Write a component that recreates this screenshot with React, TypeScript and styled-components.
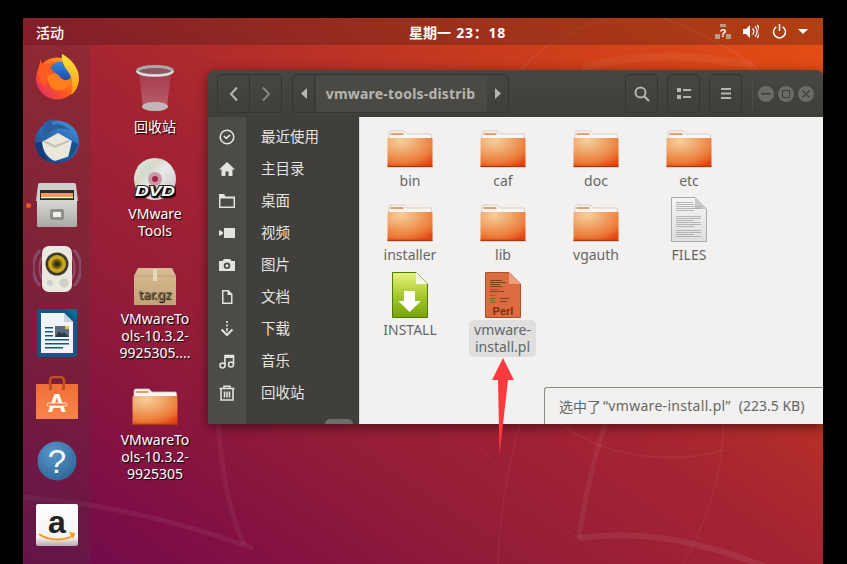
import React from "react";
import styled, { createGlobalStyle } from "styled-components";

const FONT = `"Noto Sans", "Noto Sans CJK SC", sans-serif`;

const Global = createGlobalStyle`
  html, body { margin: 0; padding: 0; background: #000; overflow: hidden; }
  * { box-sizing: border-box; }
`;

const Screen = styled.div`
  position: relative;
  width: 847px;
  height: 564px;
  padding: 18px 24px 0 23px;
  background: #000;
  font-family: ${FONT};
`;
const Desktop = styled.div`
  position: relative;
  width: 800px;
  height: 546px;
  display: flex;
  flex-direction: column;
  overflow: hidden;
  background: linear-gradient(to top right, #6c0a4e 0%, #7e0e45 12%, #921c38 30%, #a52432 50%, #c73a1e 75%, #e84f12 100%);
`;
const Wallpaper = styled.svg`
  position: absolute;
  left: 0;
  top: 0;
`;
const TopBar = styled.header`
  position: relative;
  height: 27px;
  flex: none;
  display: flex;
  align-items: center;
  padding: 0 15px 0 13px;
  background: rgba(30, 20, 20, 0.26);
  color: #fff;
  font-size: 14px;
`;
const Activities = styled.span`
  font-weight: 500;
  width: 28px;
  white-space: nowrap;
`;
const Clock = styled.span`
  margin-left: 345px;
  font-weight: 700;
  font-size: 14px;
  white-space: nowrap;
`;
const ClockTime = styled.span`
  letter-spacing: 0.7px;
  margin-left: 1px;
`;
const Tray = styled.div`
  margin-left: auto;
  display: flex;
  align-items: center;
  gap: 12px;
`;
const Body = styled.div`
  position: relative;
  flex: 1;
  display: flex;
  min-height: 0;
`;
const Dock = styled.nav`
  width: 67px;
  flex: none;
  display: flex;
  flex-direction: column;
  background: rgba(70, 60, 60, 0.24);
`;
const DockSlot = styled.div`
  position: relative;
  height: 64px;
  display: flex;
  align-items: center;
  justify-content: center;
`;
const RunDot = styled.span`
  position: absolute;
  left: 2.5px;
  top: 29.5px;
  width: 5px;
  height: 5px;
  border-radius: 50%;
  background: #e95420;
`;
const DesktopColumn = styled.div`
  width: 86px;
  margin-left: 22px;
  display: flex;
  flex-direction: column;
  align-items: center;
`;
const DesktopItem = styled.div<{ $top: number }>`
  margin-top: ${(p) => p.$top}px;
  display: flex;
  flex-direction: column;
  align-items: center;
  color: #fff;
  font-size: 14px;
  line-height: 17px;
  text-align: center;
  text-shadow: 1px 1px 1px #000;
  white-space: nowrap;
  svg { display: block; margin-bottom: 5px; }
`;
const Window = styled.section`
  position: absolute;
  left: 185px;
  top: 25px;
  width: 615px;
  height: 354px;
  display: flex;
  flex-direction: column;
  border-radius: 6px 6px 0 0;
  overflow: hidden;
  box-shadow: 0 3px 12px rgba(0, 0, 0, 0.5);
`;
const HeaderBar = styled.div`
  height: 47px;
  flex: none;
  display: flex;
  align-items: center;
  padding: 0 9px;
  background: linear-gradient(#474641, #3f3e3a);
`;
const ButtonGroup = styled.div<{ $ml?: number }>`
  height: 39px;
  display: flex;
  margin-left: ${(p) => p.$ml ?? 0}px;
  border: 1px solid #353430;
  border-radius: 5px;
  overflow: hidden;
`;
const HeadButton = styled.div<{ $w: number; $line?: boolean }>`
  width: ${(p) => p.$w}px;
  display: flex;
  align-items: center;
  justify-content: center;
  border-right: ${(p) => (p.$line ? "1px solid #353430" : "none")};
`;
const PathLabel = styled.div`
  width: 173px;
  display: flex;
  align-items: center;
  justify-content: center;
  background: #4a4944;
  box-shadow: inset 2px 0 2px -1px #2f2e2b;
  color: #b6b5af;
  font-size: 14px;
  font-weight: 700;
  letter-spacing: 0.2px;
  white-space: nowrap;
`;
const Spacer = styled.div`
  flex: 1;
`;
const Separator = styled.div`
  width: 1px;
  height: 32px;
  margin: 0 1px 0 10px;
  background: #4e4d48;
`;
const WinControl = styled.div`
  width: 16px;
  height: 16px;
  margin-left: 4px;
  border-radius: 50%;
  background: #6b6a65;
  display: flex;
  align-items: center;
  justify-content: center;
`;
const Main = styled.div`
  position: relative;
  flex: 1;
  display: flex;
  min-height: 0;
`;
const Sidebar = styled.aside`
  position: relative;
  width: 151px;
  flex: none;
  padding-top: 4px;
  background: linear-gradient(to right, #4c4b46 38px, #403f3b 38px);
`;
const SideRow = styled.div`
  height: 32px;
  display: flex;
  align-items: center;
  color: #e6e4e1;
  font-size: 14.5px;
`;
const SideLabel = styled.span`
  margin-top: -3px;
`;
const SideIcon = styled.div`
  width: 38px;
  flex: none;
  margin-right: 15px;
  display: flex;
  align-items: center;
  justify-content: center;
`;
const ScrollBump = styled.div`
  position: absolute;
  right: 6px;
  bottom: 0;
  width: 28px;
  height: 5px;
  border-radius: 14px 14px 0 0;
  background: #6e6d68;
`;
const Files = styled.main`
  flex: 1;
  padding: 3px 0 0 3px;
  display: grid;
  grid-template-columns: repeat(4, 93px);
  grid-template-rows: 74px 76px 1fr;
  background: #f2f1f0;
  border-left: 1px solid #dbd9d6;
`;
const FileItem = styled.div`
  display: flex;
  flex-direction: column;
  align-items: center;
  color: #666;
  font-size: 14px;
  line-height: 17px;
  text-align: center;
`;
const FileIconBox = styled.div<{ $gap?: number }>`
  height: 48px;
  display: flex;
  align-items: flex-end;
  margin-bottom: ${(p) => p.$gap ?? 4}px;
  svg { display: block; }
`;
const FileName = styled.div<{ $selected?: boolean }>`
  padding: ${(p) => (p.$selected ? "1px 5px 2px" : "0 0 0 1px")};
  margin-top: ${(p) => (p.$selected ? "-1px" : "0")};
  border-radius: 5px;
  background: ${(p) => (p.$selected ? "#e0dfdd" : "transparent")};
  white-space: nowrap;
`;
const Status = styled.div`
  position: absolute;
  right: 0;
  bottom: 0;
  width: 279px;
  height: 37px;
  padding: 0 0 1px 14px;
  display: flex;
  align-items: center;
  background: #f2f1f0;
  border: 1px solid #8a8985;
  border-width: 1px 0 0 1px;
  border-radius: 3px 0 0 0;
  color: #666;
  font-size: 14px;
  white-space: nowrap;
`;
const FileQuoted = styled.span`
  margin: 0 8px 0 2px;
  letter-spacing: 0.3px;
`;
const Annotation = styled.svg`
  position: absolute;
  left: 490px;
  top: 356px;
  z-index: 5;
`;

/* ---------- drawings ---------- */
const Defs = () => (
  <svg width="0" height="0" style={{ position: "absolute" }}>
    <defs>
      <radialGradient id="fold" cx="0.3" cy="0.1" r="1">
        <stop offset="0" stopColor="#f6cf9c" />
        <stop offset="0.4" stopColor="#f0a468" />
        <stop offset="0.75" stopColor="#ec7a38" />
        <stop offset="1" stopColor="#e4430f" />
      </radialGradient>
      <linearGradient id="ffx" x1="0" y1="1" x2="1" y2="0">
        <stop offset="0" stopColor="#d9246f" />
        <stop offset="0.45" stopColor="#ff5a1f" />
        <stop offset="1" stopColor="#ffc01e" />
      </linearGradient>
      <linearGradient id="ffy" x1="0" y1="0" x2="0" y2="1">
        <stop offset="0" stopColor="#ffe23a" />
        <stop offset="1" stopColor="#ff9a1a" />
      </linearGradient>
      <linearGradient id="ffg" x1="0" y1="0" x2="0" y2="1">
        <stop offset="0" stopColor="#2e8ee0" />
        <stop offset="1" stopColor="#1f2f9c" />
      </linearGradient>
      <linearGradient id="tb" x1="0.8" y1="0" x2="0.2" y2="1">
        <stop offset="0" stopColor="#3f8fd8" />
        <stop offset="1" stopColor="#143f80" />
      </linearGradient>
      <linearGradient id="steel" x1="0" y1="0" x2="0" y2="1">
        <stop offset="0" stopColor="#d8d8d5" />
        <stop offset="1" stopColor="#a9a9a6" />
      </linearGradient>
      <linearGradient id="bag" x1="0" y1="0" x2="0" y2="1">
        <stop offset="0" stopColor="#ef6f35" />
        <stop offset="1" stopColor="#f9844a" />
      </linearGradient>
      <radialGradient id="help" cx="0.4" cy="0.3" r="0.8">
        <stop offset="0" stopColor="#5b96c8" />
        <stop offset="1" stopColor="#2a6496" />
      </radialGradient>
      <linearGradient id="trash" x1="0" y1="0" x2="0" y2="1">
        <stop offset="0" stopColor="#a63a4c" />
        <stop offset="1" stopColor="#b9636f" />
      </linearGradient>
      <linearGradient id="disc" x1="0" y1="0" x2="1" y2="1">
        <stop offset="0" stopColor="#f4f4f4" />
        <stop offset="0.3" stopColor="#d4d8c8" />
        <stop offset="0.5" stopColor="#e9e9e9" />
        <stop offset="1" stopColor="#bdbdbd" />
      </linearGradient>
      <linearGradient id="box" x1="0" y1="0" x2="0" y2="1">
        <stop offset="0" stopColor="#d9bd94" />
        <stop offset="1" stopColor="#c2a377" />
      </linearGradient>
      <linearGradient id="inst" x1="0" y1="0" x2="0" y2="1">
        <stop offset="0" stopColor="#e8f37c" />
        <stop offset="0.5" stopColor="#a9c92e" />
        <stop offset="1" stopColor="#78a20e" />
      </linearGradient>
      <linearGradient id="paper" x1="0" y1="0" x2="0" y2="1">
        <stop offset="0" stopColor="#f4f4f3" />
        <stop offset="1" stopColor="#dededc" />
      </linearGradient>
      <linearGradient id="amz" x1="0" y1="0" x2="0" y2="1">
        <stop offset="0" stopColor="#ffffff" />
        <stop offset="0.8" stopColor="#f2f2f2" />
        <stop offset="1" stopColor="#b9a6b0" />
      </linearGradient>
    </defs>
  </svg>
);

const Folder = () => (
  <svg width="46" height="38" viewBox="0 0 46 38">
    <path d="M2 9V3q0-2 2-2h13l3 3h23q1.500 0 1.500 1.500V9z" fill="#f8f6f4" stroke="#c9c5c0" strokeWidth="0.8" />
    <rect x="3.500" y="3" width="13" height="2" fill="#ef9a6b" />
    <rect x="0.500" y="8" width="45" height="29" rx="1" fill="url(#fold)" />
    <rect x="0.500" y="35.800" width="45" height="1.400" fill="#a83a12" />
  </svg>
);

const TextDoc = () => {
  const lines = [5, 7, 9, 11, 13, 19, 21, 23, 25, 27, 29, 33, 35, 37, 39];
  return (
    <svg width="36" height="45" viewBox="0 0 36 45">
      <path d="M.5.500H24L35.500 12V44.500H.5z" fill="url(#paper)" stroke="#aaa" />
      <path d="M24 .5V12H35.500z" fill="#c8c8c6" />
      {lines.map((y, i) => (
        <rect key={y} x="5" y={y} width={i % 3 === 1 ? 18 : i < 2 ? 17 : 25} height="0.8" fill="#a8a8a8" />
      ))}
    </svg>
  );
};

const InstallDoc = () => (
  <svg width="36" height="46" viewBox="0 0 36 46">
    <path d="M.5.500H24L35.500 12V45.500H.5z" fill="url(#inst)" stroke="#4d7a08" />
    <path d="M24 .5V12H35.500z" fill="#f4f6e0" />
    <path d="M12 19h11v10h6L17.500 40 6.500 29H12z" fill="#fff" />
  </svg>
);

const PerlDoc = () => {
  const lines: [number, number, string][] = [
    [8, 12, "#7a3a20"], [10, 16, "#7a3a20"], [12, 10, "#7a3a20"], [14, 12, "#7a3a20"], [17, 9, "#c33"], [19, 14, "#7a3a20"],
    [23, 5, "#6b6b20"], [26, 6, "#6b6b20"], [28, 5, "#6b6b20"], [30, 6, "#6b6b20"],
  ];
  return (
    <svg width="36" height="46" viewBox="0 0 36 46">
      <path d="M.5.500H24L35.500 12V45.500H.5z" fill="#dc6b3f" stroke="#b24e28" />
      <path d="M24 .5V12H35.500z" fill="#eda07e" />
      {lines.map(([y, w, c]) => (
        <rect key={y} x="5" y={y} width={w} height="0.9" fill={c} />
      ))}
      <rect x="15" y="26" width="9" height="0.9" fill="#7a3a20" />
      <rect x="15" y="29" width="7" height="0.9" fill="#7a3a20" />
      <text x="18" y="43" textAnchor="middle" fontFamily="'Liberation Sans', sans-serif" fontWeight="700" fontSize="11" fill="#7d3015">Perl</text>
    </svg>
  );
};

const Firefox = () => (
  <svg width="44" height="46" viewBox="0 0 44 46">
    <circle cx="22" cy="24.500" r="21" fill="url(#ffx)" />
    <circle cx="25" cy="20" r="12.500" fill="url(#ffg)" />
    <path d="M27 0C35 4 44 13 44 24c0 8-4 14-8 17 3-10 1-19-4-25-3-4-6-10-5-16z" fill="url(#ffy)" />
    <path d="M12 21c3-4 10-3 13 2 3 4 9 4 11 0 1 8-7 15-15 13-6-2-9-9-9-15z" fill="#ff7f1e" />
    <path d="M6 5c0 4 2 6 5 6 3-2 7-3 11-3-1 2-5 3-6 5-1 3 4 4 4 6-3 2-8 1-9 5-1 3-1 6 0 9C5 30 2 20 4 12c1-3 1-5 2-7z" fill="#ff5a1f" />
  </svg>
);

const Thunderbird = () => (
  <svg width="44" height="46" viewBox="0 0 44 46">
    <ellipse cx="22" cy="24" rx="22" ry="21.500" fill="url(#tb)" />
    <path d="M8 6c4-4 9-5 12-5-3 2-4 4-3 6 6-2 14 0 18 6-5-3-11-3-16-1-4 1-7 5-8 9C9 18 7 11 8 6z" fill="#2c5d9e" />
    <path d="M7 24l16-9 14 8-2 15-15 5C12 40 8 33 7 24z" fill="#ece7dc" />
    <path d="M8 24l12 6 16-7-2-1-14 5-11-5z" fill="#c9c3b6" />
    <path d="M0 25c0 9 6 16 14 19-4-5-7-12-7-20z" fill="#123d78" />
    <path d="M33 40c5-3 9-8 10-14l-6-3z" fill="#17508f" />
  </svg>
);

const Cabinet = () => (
  <svg width="42" height="44" viewBox="0 0 42 44">
    <path d="M2 2q0-2 2-2h34q2 0 2 2l2 16H0z" fill="#cfcfcd" />
    <rect x="4" y="7" width="34" height="12" fill="#2d2a27" />
    <rect x="5" y="10" width="32" height="4" fill="#ef9a55" />
    <rect x="5" y="14" width="32" height="1.200" fill="#fff" />
    <rect x="1" y="17" width="40" height="27" rx="1.500" fill="url(#steel)" />
    <rect x="14" y="26" width="14" height="11" rx="2" fill="#8e8e8b" />
    <rect x="16.500" y="28.500" width="9" height="6" fill="#efefed" stroke="#777" strokeWidth="0.6" />
  </svg>
);

const Rhythmbox = () => (
  <svg width="48" height="46" viewBox="0 0 48 46">
    <path d="M7 4C-2 14-2 30 7 40M41 4c9 10 9 26 0 36" fill="none" stroke="#8c7ea4" strokeWidth="3" opacity="0.45" />
    <path d="M11 8C5 16 5 28 11 36M37 8c6 8 6 20 0 28" fill="none" stroke="#a89ab8" strokeWidth="2" opacity="0.4" />
    <rect x="9" y="0" width="30" height="46" rx="7" fill="#e9e9e1" />
    <circle cx="24" cy="18" r="11.500" fill="#3c3a2c" />
    <circle cx="24" cy="18" r="9" fill="#c7a41f" />
    <circle cx="24" cy="18" r="5" fill="#6d5c12" />
    <circle cx="24" cy="18" r="2.500" fill="#2f2b18" />
    <circle cx="17" cy="37" r="3" fill="#d0d0c8" />
    <circle cx="31" cy="37" r="4.500" fill="#cfcfc6" />
  </svg>
);

const Writer = () => (
  <svg width="40" height="48" viewBox="0 0 40 48">
    <path d="M2 0H29L40 11V45q0 3-3 3H3q-3 0-3-3V2q0-2 2-2z" fill="#0e5a86" />
    <path d="M29 0h9q2 0 2 2v9z" fill="#14699b" />
    <path d="M4 4H27L36 13V44H4z" fill="#f3f4f5" />
    <path d="M27 4V13H36z" fill="#c7d2da" />
    <g fill="#0e5a86">
      <rect x="8" y="18" width="8" height="1.500" />
      <rect x="8" y="22" width="8" height="1.500" />
      <rect x="8" y="26" width="8" height="1.500" />
      <rect x="8" y="30" width="24" height="1.500" />
      <rect x="8" y="34" width="24" height="1.500" />
      <rect x="8" y="38" width="18" height="1.500" />
    </g>
    <rect x="18" y="17" width="14" height="11" fill="#5a6f7d" />
    <path d="M18 28l4-6 3 3 2-2 5 5z" fill="#2d3a44" />
    <rect x="28" y="17" width="4" height="3" fill="#e6c84a" />
  </svg>
);

const Bag = () => (
  <svg width="42" height="43" viewBox="0 0 42 43">
    <path d="M14 13V5q0-4 4-4h6q4 0 4 4v8" fill="none" stroke="#c24f1f" strokeWidth="2.500" />
    <rect x="0" y="8" width="42" height="35" fill="url(#bag)" />
    <rect x="13" y="8" width="3" height="6" fill="#c24f1f" />
    <rect x="26" y="8" width="3" height="6" fill="#c24f1f" />
    <text x="21" y="36" textAnchor="middle" fontFamily="'Liberation Sans', sans-serif" fontWeight="700" fontSize="26" fill="#fff">A</text>
    <rect x="11" y="27" width="20" height="3" rx="1.500" fill="#f47b3c" stroke="#fff" strokeWidth="0.800" />
  </svg>
);

const Help = () => (
  <svg width="40" height="40" viewBox="0 0 40 40">
    <circle cx="20" cy="20" r="19.500" fill="url(#help)" />
    <text x="20" y="32" textAnchor="middle" fontFamily="'Liberation Sans', sans-serif" fontWeight="400" fontSize="33" fill="#fff">?</text>
  </svg>
);

const Amazon = () => (
  <svg width="42" height="42" viewBox="0 0 42 42">
    <rect width="42" height="42" rx="2" fill="url(#amz)" />
    <text x="21" y="29" textAnchor="middle" fontFamily="'Liberation Sans', sans-serif" fontWeight="700" fontSize="32" fill="#222">a</text>
    <path d="M3 30c8 6 24 8 35 1" fill="none" stroke="#f19a1e" strokeWidth="2" />
    <path d="M33 28l6 1-2 6z" fill="#f19a1e" />
  </svg>
);

const Trash = () => (
  <svg width="38" height="48" viewBox="0 0 38 48">
    <path d="M3 8l4 34q0 4 12 4t12-4l4-34z" fill="url(#trash)" />
    <ellipse cx="19" cy="41.500" rx="13" ry="4.500" fill="#c2b6b8" />
    <ellipse cx="19" cy="6" rx="17.500" ry="4.500" fill="#8d5660" stroke="#a9a9a7" strokeWidth="3" />
    <path d="M1 6c2 6 34 6 36 0" fill="none" stroke="#e2e2e0" strokeWidth="1.800" />
  </svg>
);

const Dvd = () => (
  <svg width="42" height="42" viewBox="0 0 42 42">
    <circle cx="21" cy="21" r="21" fill="url(#disc)" />
    <path d="M21 21L3 9a21 21 0 0 1 10-7z" fill="#cfe0d0" opacity="0.7" />
    <circle cx="21" cy="21" r="7" fill="#c99aa6" />
    <circle cx="21" cy="21" r="3" fill="#a5243e" />
    <text x="21" y="38" textAnchor="middle" fontFamily="'Liberation Sans', sans-serif" fontWeight="700" fontStyle="italic" fontSize="15" fill="#fff" stroke="#222" strokeWidth="2" paintOrder="stroke" textLength="40" lengthAdjust="spacingAndGlyphs">DVD</text>
  </svg>
);

const TarBox = () => (
  <svg width="42" height="37" viewBox="0 0 42 37">
    <path d="M4 0h34l4 8v29H0V8z" fill="url(#box)" />
    <path d="M0 8h42" stroke="#b7986d" strokeWidth="0.800" />
    <rect x="19" y="1" width="4" height="12" fill="#e8d6b8" />
    <text x="21" y="31" textAnchor="middle" fontFamily="'Noto Sans', sans-serif" fontSize="13" fill="#75664f">tar.gz</text>
  </svg>
);

const S = { fill: "none", stroke: "#e4e2df", strokeWidth: 1.6 } as const;
const sideIcons: Record<string, React.ReactNode> = {
  clock: (<><circle cx="8" cy="8" r="6.800" {...S} /><path d="M4.800 7l2.500 2.300L11 5.800" {...S} /></>),
  home: (<path d="M8 1L0 8.500h2.500V15h4v-4.500h3V15h4V8.500H16z" fill="#e4e2df" />),
  folder: (<path d="M0 1h5l1.500 2.500H16V15H0zM1.500 5.500V13.500H14.500V5.500z" fill="#e4e2df" fillRule="evenodd" />),
  video: (<path d="M5 3h11v10H5zM0 5l4 2v2l-4 2z" fill="#e4e2df" />),
  camera: (<path d="M5 2h6l1.500 2H16v10H0V4h3.500zM8 5.500a3.300 3.300 0 1 0 0 6.600 3.300 3.300 0 0 0 0-6.600zM8 7.300a1.500 1.500 0 1 1 0 3 1.500 1.500 0 0 1 0-3z" fill="#e4e2df" fillRule="evenodd" />),
  file: (<path d="M3 1h6.500L13.500 5v10H3zM4.500 2.500v11h7.500V6H8.500V2.500z" fill="#e4e2df" fillRule="evenodd" />),
  down: (<><path d="M8 0v2M8 3.500v2M8 7v3.500" {...S} /><path d="M2.500 8.500L8 14l5.500-5.500" {...S} strokeWidth={2} /></>),
  music: (<><circle cx="3.500" cy="12.500" r="2.500" {...S} /><circle cx="12" cy="11.500" r="2.500" {...S} /><path d="M6 12V2.500h8.500V11" {...S} /><path d="M6 2.500h8.500V5H6z" fill="#e4e2df" /></>),
  trash: (<><path d="M0.500 3.500h15" {...S} /><path d="M5 3.500V1.200h6v2.300" {...S} /><path d="M2 4v11h12V4M5.500 6.500v6M8 6.500v6M10.500 6.500v6" {...S} /></>),
};
const places: [string, string][] = [
  ["clock", "最近使用"], ["home", "主目录"], ["folder", "桌面"], ["video", "视频"], ["camera", "图片"],
  ["file", "文档"], ["down", "下载"], ["music", "音乐"], ["trash", "回收站"],
];

const HS = { fill: "none", stroke: "#b6b5af", strokeLinecap: "butt" } as const;
const Chevron = ({ left, color }: { left?: boolean; color: string }) => (
  <svg width="12" height="16" viewBox="0 0 12 16">
    <path d={left ? "M9 1.500L3 8l6 6.500" : "M3 1.500L9 8l-6 6.500"} fill="none" stroke={color} strokeWidth="2" />
  </svg>
);
const Tri = ({ left }: { left?: boolean }) => (
  <svg width="6" height="11" viewBox="0 0 6 11">
    <path d={left ? "M6 0v11L0 5.500z" : "M0 0v11l6-5.500z"} fill="#b6b5af" />
  </svg>
);

const folders = ["bin", "caf", "doc", "etc", "installer", "lib", "vgauth"];

export default function App() {
  return (
    <Screen>
      <Global />
      <Defs />
      <Desktop>
        <Wallpaper width="800" height="546" viewBox="0 0 800 546">
          <g fill="none" stroke="#fff">
            <path d="M0 479C70 485 140 498 230 530" strokeWidth="5" opacity="0.055" />
            <path d="M195 405c4 46 10 86 26 122" strokeWidth="5" opacity="0.05" />
            <path d="M556 520c60-8 120 2 190 30" strokeWidth="6" opacity="0.07" />
            <path d="M584 400c-12 36-22 78-28 120" strokeWidth="5" opacity="0.06" />
            <path d="M497 406c-14 50-20 90-22 140" strokeWidth="1.500" opacity="0.05" />
            <path d="M536 404c40 34 110 44 165 28" strokeWidth="2" opacity="0.05" />
            <path d="M700 400c2 60-20 110-40 146" strokeWidth="1.500" opacity="0.05" />
            <path d="M450 420c40 50 70 80 106 100" strokeWidth="1" opacity="0.05" />
            <path d="M560 50c50-14 110-16 170 -2" strokeWidth="8" opacity="0.05" />
            <path d="M640 0c40 14 90 40 125 80" strokeWidth="2" opacity="0.07" />
            <path d="M490 62c30-40 60-50 90-60" strokeWidth="1.500" opacity="0.06" />
            <path d="M90 27L200 120" strokeWidth="1" opacity="0.04" />
          </g>
        </Wallpaper>
        <TopBar>
          <Activities>活动</Activities>
          <Clock>星期一<ClockTime> 23：18</ClockTime></Clock>
          <Tray>
            <svg width="16" height="15" viewBox="0 0 16 15">
              <g fill="#b79c8a">
                <rect x="5" y="0" width="6" height="3" />
                <rect x="0" y="10" width="5" height="5" />
                <rect x="11" y="10" width="5" height="5" />
              </g>
              <text x="8" y="13" textAnchor="middle" fontFamily="'Liberation Sans', sans-serif" fontWeight="700" fontSize="11" fill="#fff">?</text>
            </svg>
            <svg width="16" height="15" viewBox="0 0 16 15">
              <path d="M0 5h3l4-4v13l-4-4H0z" fill="#fff" />
              <path d="M9.500 4.500a4 4 0 0 1 0 6M12 2.500a7 7 0 0 1 0 10M14.200 1a10 10 0 0 1 0 13" fill="none" stroke="#fff" strokeWidth="1.300" />
            </svg>
            <svg width="15" height="15" viewBox="0 0 15 15" style={{ marginLeft: 1 }}>
              <path d="M4.300 2.800a6 6 0 1 0 6.400 0" fill="none" stroke="#fff" strokeWidth="1.500" />
              <path d="M7.500 0v7" stroke="#fff" strokeWidth="1.500" />
            </svg>
            <svg width="10" height="5" viewBox="0 0 10 5" style={{ marginLeft: -1 }}>
              <path d="M0 0h10L5 5z" fill="#fff" />
            </svg>
          </Tray>
        </TopBar>
        <Body>
          <Dock>
            <DockSlot><Firefox /></DockSlot>
            <DockSlot><Thunderbird /></DockSlot>
            <DockSlot><RunDot /><Cabinet /></DockSlot>
            <DockSlot><Rhythmbox /></DockSlot>
            <DockSlot><Writer /></DockSlot>
            <DockSlot><Bag /></DockSlot>
            <DockSlot><Help /></DockSlot>
            <DockSlot><Amazon /></DockSlot>
          </Dock>
          <DesktopColumn>
            <DesktopItem $top={20}>
              <Trash />
              <div>回收站</div>
            </DesktopItem>
            <DesktopItem $top={23}>
              <Dvd />
              <div>VMware<br />Tools</div>
            </DesktopItem>
            <DesktopItem $top={29}>
              <TarBox />
              <div>VMwareTo<br />ols-10.3.2-<br />9925305....</div>
            </DesktopItem>
            <DesktopItem $top={27}>
              <Folder />
              <div>VMwareTo<br />ols-10.3.2-<br />9925305</div>
            </DesktopItem>
          </DesktopColumn>
          <Window>
            <HeaderBar>
              <ButtonGroup>
                <HeadButton $w={32} $line><Chevron left color="#b6b5af" /></HeadButton>
                <HeadButton $w={31}><Chevron color="#85847f" /></HeadButton>
              </ButtonGroup>
              <ButtonGroup $ml={10}>
                <HeadButton $w={21}><Tri left /></HeadButton>
                <PathLabel>vmware-tools-distrib</PathLabel>
                <HeadButton $w={21}><Tri /></HeadButton>
              </ButtonGroup>
              <Spacer />
              <ButtonGroup>
                <HeadButton $w={31}>
                  <svg width="16" height="16" viewBox="0 0 16 16">
                    <circle cx="6.500" cy="6.500" r="5" {...HS} strokeWidth="2" />
                    <path d="M10 10l5 5" {...HS} strokeWidth="2.200" />
                  </svg>
                </HeadButton>
              </ButtonGroup>
              <ButtonGroup $ml={9}>
                <HeadButton $w={31}>
                  <svg width="14" height="12" viewBox="0 0 14 12" fill="#b6b5af">
                    <rect x="0" y="0" width="4" height="4" />
                    <rect x="0" y="7" width="4" height="4" />
                    <rect x="6" y="1" width="8" height="2" />
                    <rect x="6" y="8" width="8" height="2" />
                  </svg>
                </HeadButton>
              </ButtonGroup>
              <ButtonGroup $ml={9}>
                <HeadButton $w={31}>
                  <svg width="10" height="11" viewBox="0 0 10 11" fill="#b6b5af">
                    <rect width="10" height="2" />
                    <rect y="4.500" width="10" height="2" />
                    <rect y="9" width="10" height="2" />
                  </svg>
                </HeadButton>
              </ButtonGroup>
              <Separator />
              <WinControl>
                <svg width="10" height="2" viewBox="0 0 10 2"><rect width="10" height="1.500" fill="#3f3e3a" /></svg>
              </WinControl>
              <WinControl>
                <svg width="8" height="8" viewBox="0 0 8 8"><rect x=".5" y=".5" width="7" height="7" fill="none" stroke="#3f3e3a" /></svg>
              </WinControl>
              <WinControl>
                <svg width="8" height="8" viewBox="0 0 8 8"><path d="M.5.500l7 7M7.500.500l-7 7" stroke="#3f3e3a" strokeWidth="1.100" /></svg>
              </WinControl>
            </HeaderBar>
            <Main>
              <Sidebar>
                {places.map(([icon, name]) => (
                  <SideRow key={icon}>
                    <SideIcon>
                      <svg width="16" height="16" viewBox="0 0 16 16">{sideIcons[icon]}</svg>
                    </SideIcon>
                    <SideLabel>{name}</SideLabel>
                  </SideRow>
                ))}
                <ScrollBump />
              </Sidebar>
              <Files>
                {folders.map((f) => (
                  <FileItem key={f}>
                    <FileIconBox><Folder /></FileIconBox>
                    <FileName>{f}</FileName>
                  </FileItem>
                ))}
                <FileItem>
                  <FileIconBox><TextDoc /></FileIconBox>
                  <FileName>FILES</FileName>
                </FileItem>
                <FileItem>
                  <FileIconBox $gap={3}><InstallDoc /></FileIconBox>
                  <FileName>INSTALL</FileName>
                </FileItem>
                <FileItem>
                  <FileIconBox $gap={3}><PerlDoc /></FileIconBox>
                  <FileName $selected>vmware-<br />install.pl</FileName>
                </FileItem>
              </Files>
              <Status>
                选中了<FileQuoted>“vmware-install.pl”</FileQuoted>(223.5 KB)
              </Status>
            </Main>
          </Window>
        </Body>
      </Desktop>
      <Annotation width="26" height="102" viewBox="0 0 26 102">
        <path d="M13 2L24 24H18L9.500 99 8 24H2z" fill="#fd3a3e" />
      </Annotation>
    </Screen>
  );
}
